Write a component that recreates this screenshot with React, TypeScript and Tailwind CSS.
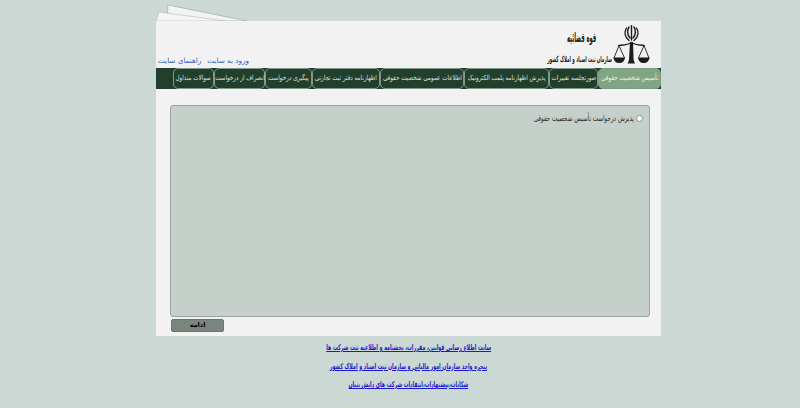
import React from 'react';

const font = { fontFamily: '"DejaVu Sans", "Liberation Sans", sans-serif' };

const tabs = [
  { label: 'تأسیس شخصیت حقوقی', width: 'w-[63px]', active: true },
  { label: 'صورتجلسه تغییرات', width: 'w-[49px]' },
  { label: 'پذیرش اظهارنامه پلمب الکترونیک', width: 'w-[85px]' },
  { label: 'اطلاعات عمومی شخصیت حقوقی', width: 'w-[84px]' },
  { label: 'اظهارنامه دفتر ثبت تجارتی', width: 'w-[68px]' },
  { label: 'پیگیری درخواست', width: 'w-[47px]' },
  { label: 'انصراف از درخواست', width: 'w-[51px]' },
  { label: 'سوالات متداول', width: 'w-[41px]' },
];

const links = [
  'سایت اطلاع رسانی قوانین، مقررات، بخشنامه و اطلاعیه ثبت شرکت ها',
  'پنجره واحد سازمان امور مالیاتی و سازمان ثبت اسناد و املاک کشور',
  'شکایات،پیشنهادات،انتقادات شرکت های دانش بنیان',
];

const Emblem = () => (
  <svg viewBox="0 0 37 40" className="h-[40px] w-[37px] shrink-0">
    <g fill="none" stroke="#1c1c1c" strokeLinecap="round">
      <path d="M18.500 0v15" strokeWidth="1.400" />
      <path d="M16 2c-2 3-2 8 1 11M21 2c2 3 2 8-1 11" strokeWidth="1.500" />
      <path d="M13.500 3c-2.500 4-2 9 2.500 12.500M23.500 3c2.500 4 2 9-2.500 12.500" strokeWidth="1.400" />
      <path d="M6 20.500c5-.5 9-.5 12.500-3 3.500 2.500 7.500 2.500 12.500 3" strokeWidth="1.500" />
      <path d="M6 20.500L1 33M6 20.500L11.500 33M31 20.500L25.500 33M31 20.500L36 33" strokeWidth="0.900" />
    </g>
    <path d="M17 17h3l.6 18 1.400 3.500h-7.400l1.400-3.500z" fill="#1c1c1c" />
    <path d="M.5 32.500h11.500c-.3 3.500-2.300 5.500-5.800 5.500S.8 36 .5 32.500zM25 32.500h11.500c-.3 3.500-2.300 5.500-5.800 5.500S25.300 36 25 32.500z" fill="#1c1c1c" />
  </svg>
);

const App: React.FC = () => {
  return (
    <div dir="rtl" className="min-h-[408px] w-[800px] overflow-hidden bg-[#ccd8d3] pt-[5px]" style={font}>
      <div dir="ltr" className="mr-[139px] h-[16px] w-[505px]">
        <svg viewBox="0 0 100 16" className="h-[16px] w-[100px]">
          <path d="M12 0l79 16H11z" fill="#f2f3f3" stroke="#9aa5a2" strokeWidth="0.600" />
          <path d="M3 7l67 9H0z" fill="#f4f4f4" stroke="#a5aeab" strokeWidth="0.500" />
        </svg>
      </div>

      <div className="mr-[139px] w-[505px] bg-[#f2f2f2]">
        <header className="flex h-[47px] items-end justify-between">
          <div className="flex items-end gap-[3px] pr-[11px] pb-[3px]">
            <Emblem />
            <div className="flex h-[40px] w-[60px] flex-col items-center justify-between leading-none text-[#1a1a1a]">
              <span className="mt-[6px] mr-[-4px] inline-block scale-x-[0.4] text-[13px] font-bold whitespace-nowrap">قوه قضائیه</span>
              <span className="mb-[2px] inline-block scale-x-[0.47] text-[8.500px] font-bold whitespace-nowrap">سازمان ثبت اسناد و املاک کشور</span>
            </div>
          </div>
          <nav className="flex gap-[6px] pb-[2px] pl-[2px] text-[7.250px] leading-[10px] text-[#2f5fc0]">
            <a>ورود به سایت</a>
            <a>راهنمای سایت</a>
          </nav>
        </header>

        <nav className="flex h-[21px] items-stretch bg-[#223f2e]">
          {tabs.map((tab) => (
            <a
              key={tab.label}
              className={`${tab.width} flex shrink-0 items-center justify-center rounded-[5px] border border-[#7f9a86] text-[7px] ${
                tab.active ? 'bg-[#7fa583] text-[#f0f4ee]' : 'text-[#dfe6de]'
              }`}
            >
              <span className="inline-block scale-x-[0.8] whitespace-nowrap">{tab.label}</span>
            </a>
          ))}
        </nav>

        <main className="px-[11px] pt-[16px] pb-[4px]">
          <div className="ml-[3px] h-[212px] rounded-[3px] border border-[#98a5a0] bg-[#c6d0cb] pt-[6px] pr-[6px]">
            <label className="flex items-center gap-[2px] text-[8.500px] leading-[12px] text-[#2a2a2a]">
              <span className="h-[7px] w-[7px] rounded-full border border-[#8a8f8d] bg-white" />
              <span className="inline-block origin-right scale-x-[0.66] whitespace-nowrap">پذیرش درخواست تأسیس شخصیت حقوقی</span>
            </label>
          </div>
          <div className="flex justify-end pt-[2px] pl-[4px]">
            <button className="flex h-[13px] w-[53px] items-center justify-center rounded-[2px] border border-[#6c7570] bg-[#7b8580] text-[6.500px] leading-none font-bold text-black">
              ادامه
            </button>
          </div>
        </main>
      </div>

      <footer className="mr-[139px] flex w-[505px] flex-col items-center gap-[8.500px] pt-[7px]">
        {links.map((link) => (
          <a key={link} className="inline-block scale-x-[0.59] text-[8px] leading-[10px] font-bold whitespace-nowrap text-[#1a1ad0] underline">
            {link}
          </a>
        ))}
      </footer>
    </div>
  );
};

export default App;
